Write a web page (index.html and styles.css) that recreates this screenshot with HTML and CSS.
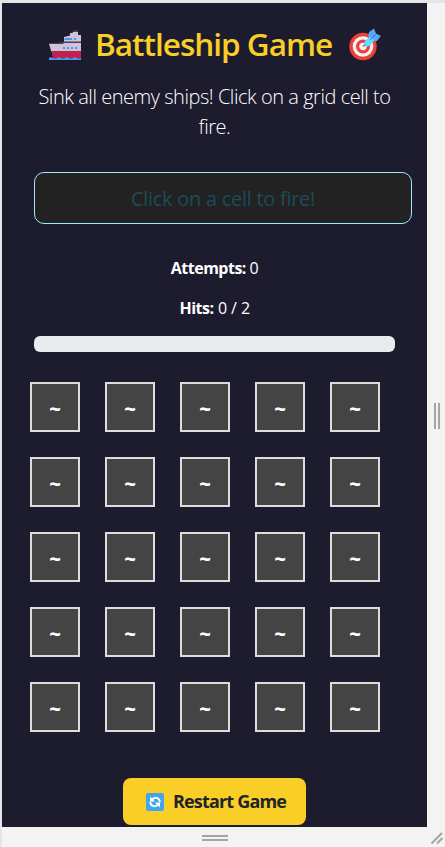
FILE: index.html
```
<!DOCTYPE html>
<html lang="en">
<head>
<meta charset="utf-8">
<title>Battleship Game</title>
<link rel="stylesheet" href="styles.css">
</head>
<body>
<div class="device">
  <main class="screen">
    <h1 class="title">
      <svg class="ship" viewBox="0 0 33 31">
        <path fill="#533566" d="M22 3.500 25 0h4v3h-7z"/>
        <path fill="#cfc3d8" d="M15 12V7l6-1.500V3h3V2h5v3h3v8H15z"/>
        <path fill="#533566" d="M0 13h8l7-1.500h17V13l-18 1H0z"/>
        <path fill="#cfc3d8" d="M0 14h14l1-1h17v9H2.500z"/>
        <path fill="#c2204e" d="M2.500 21h29.500V29H4z"/>
        <path fill="#419bf3" d="M16 8h7v2h-8zM25 8h2v2h-2zM14 17h2v2h-2zM18 17h2v2h-2zM22 17h2v2h-2zM26 17h2v2h-2zM0 28q2-1.500 4 0t4 0 4 0 4 0 4 0 4 0 4 0 4 0V30H0z"/>
      </svg>
      <span class="title-text">Battleship Game</span>
      <svg class="target" viewBox="0 0 33 33">
        <circle cx="14" cy="18.500" r="13.700" fill="#ee3f3a"/>
        <circle cx="14" cy="18.500" r="10.300" fill="#f5f3f5"/>
        <circle cx="14" cy="18.500" r="7" fill="#ee3f3a"/>
        <circle cx="14" cy="18.500" r="3.700" fill="#f5f3f5"/>
        <path fill="#5ba5f8" d="M19 10 20 4l5-3.500 2 5L32 8l-4 5-6 1z"/>
        <path fill="#62ddfd" d="m15 17 1-4.500L21 9l4 3-3 5-5 2z"/>
        <path stroke="#3e78bd" stroke-width="1" fill="none" d="m21 12 6-6"/>
        <path stroke="#7b7680" stroke-width="1.500" fill="none" d="m14 18.500 2-2"/>
      </svg>
    </h1>
    <p class="lead">Sink all enemy ships! Click on a grid cell to<br>fire.</p>
    <div class="message"><span>Click on a cell to fire!</span></div>
    <p class="stat attempts"><strong>Attempts:</strong> 0</p>
    <p class="stat hits"><strong>Hits:</strong> 0 / 2</p>
    <div class="progress"></div>
    <div class="board">
      <div class="cell">~</div><div class="cell">~</div><div class="cell">~</div><div class="cell">~</div><div class="cell">~</div>
      <div class="cell">~</div><div class="cell">~</div><div class="cell">~</div><div class="cell">~</div><div class="cell">~</div>
      <div class="cell">~</div><div class="cell">~</div><div class="cell">~</div><div class="cell">~</div><div class="cell">~</div>
      <div class="cell">~</div><div class="cell">~</div><div class="cell">~</div><div class="cell">~</div><div class="cell">~</div>
      <div class="cell">~</div><div class="cell">~</div><div class="cell">~</div><div class="cell">~</div><div class="cell">~</div>
    </div>
    <button class="restart">
      <svg class="reload" viewBox="0 0 18 18">
        <rect width="18" height="18" rx="2" fill="#41a5ee"/>
        <path fill="none" stroke="#fff" stroke-width="2" d="M6 6.500Q10 3 13 6.500L14 9M12 11.500Q8 15 5 11.500L4 9"/>
        <path fill="#fff" d="M4 3.500v5h5zM14 14.500v-5H9z"/>
      </svg>
      <span>Restart Game</span>
    </button>
  </main>
  <div class="side"><svg width="6" height="26"><path fill="#a5a5a5" d="M0 0h2v26H0zM4 0h2v26H4z"/></svg></div>
  <div class="bottom"><svg width="26" height="6"><path fill="#a5a5a5" d="M0 0h26v2H0zM0 4h26v2H0z"/></svg></div>
  <div class="corner"><svg width="14" height="14"><path stroke="#a5a5a5" stroke-width="2" fill="none" d="M1.500 12.500 12 2M7 12.500 12.500 7"/></svg></div>
</div>
</body>
</html>
```
FILE: styles.css
```
* { box-sizing: border-box; }
body {
  margin: 0;
  height: 847px;
  overflow: hidden;
  background: #e4e5e6;
  font-family: "Open Sans", "Noto Sans", sans-serif;
  color: #fff;
}
.device {
  display: grid;
  grid-template-columns: 425px 18px;
  grid-template-rows: 824px 20px;
  padding: 3px 0 0 2px;
}
.screen { background: #1d1b2e; padding-top: 21px; }
.side, .bottom, .corner { display: flex; background: #f3f3f3; }
.side { padding: 400px 0 0 7px; }
.bottom { padding: 8px 0 0 200px; }
.corner { padding: 4px 0 0 3px; }
.title {
  display: flex;
  margin: 0;
  height: 38px;
  padding-left: 47px;
  font-size: 31.5px;
  line-height: 40px;
  font-weight: 600;
  color: #f9ce26;
}
.ship { width: 33px; height: 31px; margin-top: 6px; flex: none; }
.title-text { width: 266px; padding-left: 13px; margin-right: 1px; white-space: nowrap; letter-spacing: -1px; flex: none; }
.target { width: 33px; height: 33px; margin-top: 4px; flex: none; }
.lead {
  margin: 20px 0 0;
  text-align: center;
  font-size: 20px;
  line-height: 30px;
  font-weight: 300;
  letter-spacing: -0.46px;
  white-space: nowrap;
}
.message {
  width: 378px;
  height: 52px;
  margin: 30px 0 0 32px;
  padding: 11px 10px 9px;
  border: 1px solid #9eeaf9;
  border-radius: 10px;
  background: #222;
  color: #1b4c5a;
  text-align: center;
  font-size: 20px;
  line-height: 30px;
  letter-spacing: -0.27px;
}
.stat { margin: 32px 0 0; text-align: center; font-size: 16px; line-height: 24px; letter-spacing: -0.5px; }
.hits { margin-top: 16px; word-spacing: 0.8px; }
.progress { width: 361px; height: 16px; margin: 16px 0 0 32px; border-radius: 6px; background: #e9ecef; }
.board {
  display: grid;
  grid-template-columns: repeat(5, 50px);
  grid-auto-rows: 50px;
  gap: 25px;
  margin: 30px 0 0 28px;
}
.cell {
  border: 2px solid #ddd;
  background: #444;
  text-align: center;
  font-size: 20px;
  line-height: 50px;
  font-weight: 800;
}
.restart {
  display: flex;
  width: 183px;
  height: 47px;
  margin: 46px 0 0 121px;
  padding: 10px 0 10px 23px;
  border: 0;
  border-radius: 8px;
  background: #f9ce26;
  color: #212529;
  font: 700 18px/27px "Open Sans", "Noto Sans", sans-serif;
  letter-spacing: -0.83px;
  white-space: nowrap;
}
.reload { width: 18px; height: 18px; margin: 5px 9px 0 0; flex: none; }
```
